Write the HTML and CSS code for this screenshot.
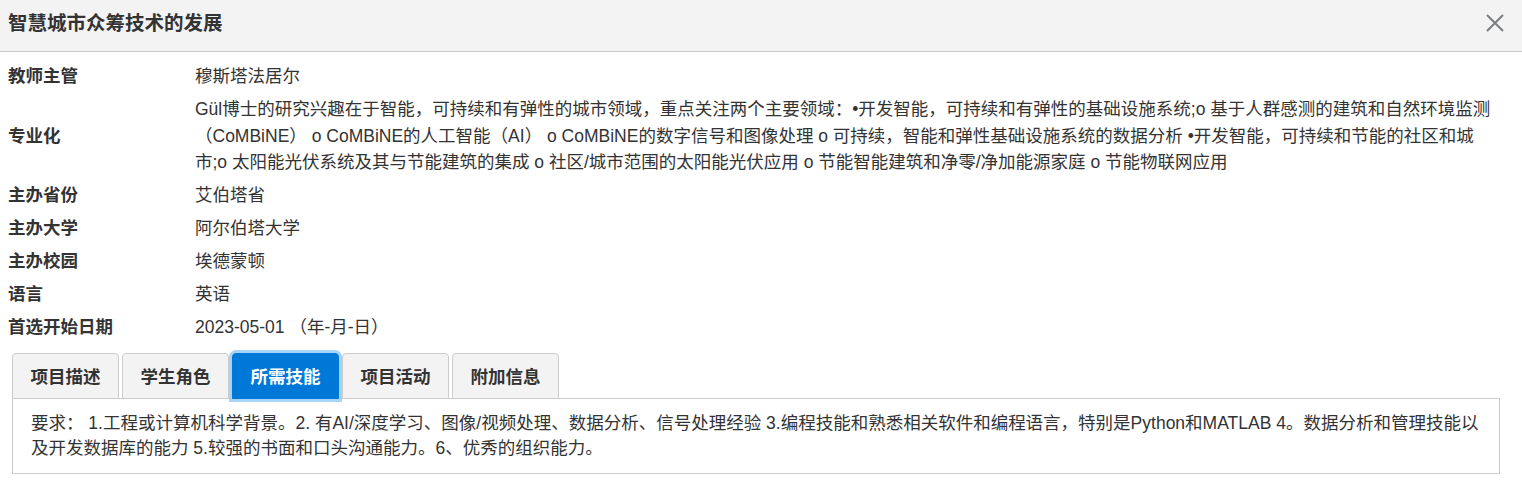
FILE: index.html
```html
<!DOCTYPE html>
<html lang="zh-CN">
<head>
<meta charset="utf-8">
<title>智慧城市众筹技术的发展</title>
<link rel="stylesheet" href="styles.css">
</head>
<body>
<div class="modal">
  <div class="modal-header">
    <h4 class="modal-title">智慧城市众筹技术的发展</h4>
    <button class="close" type="button" aria-label="关闭">
      <svg width="18" height="18" viewBox="0 0 18 18"><path d="M1 1 L17 17 M17 1 L1 17" stroke="currentColor" stroke-width="2" fill="none"/></svg>
    </button>
  </div>
  <div class="modal-body">
    <div class="info">
      <div class="label">教师主管</div>
      <div class="value">穆斯塔法居尔</div>
      <div class="label">专业化</div>
      <div class="value">Gül博士的研究兴趣在于智能，可持续和有弹性的城市领域，重点关注两个主要领域：•开发智能，可持续和有弹性的基础设施系统;o 基于人群感测的建筑和自然环境监测（CoMBiNE） o CoMBiNE的人工智能（AI） o CoMBiNE的数字信号和图像处理 o 可持续，智能和弹性基础设施系统的数据分析 •开发智能，可持续和节能的社区和城市;o 太阳能光伏系统及其与节能建筑的集成 o 社区/城市范围的太阳能光伏应用 o 节能智能建筑和净零/净加能源家庭 o 节能物联网应用</div>
      <div class="label">主办省份</div>
      <div class="value">艾伯塔省</div>
      <div class="label">主办大学</div>
      <div class="value">阿尔伯塔大学</div>
      <div class="label">主办校园</div>
      <div class="value">埃德蒙顿</div>
      <div class="label">语言</div>
      <div class="value">英语</div>
      <div class="label">首选开始日期</div>
      <div class="value">2023-05-01 （年-月-日）</div>
    </div>
    <div class="tabs">
      <ul class="tab-list">
        <li class="tab">项目描述</li>
        <li class="tab">学生角色</li>
        <li class="tab active">所需技能</li>
        <li class="tab">项目活动</li>
        <li class="tab">附加信息</li>
      </ul>
      <div class="tab-panel">要求： 1.工程或计算机科学背景。2. 有AI/深度学习、图像/视频处理、数据分析、信号处理经验 3.编程技能和熟悉相关软件和编程语言，特别是Python和MATLAB 4。数据分析和管理技能以及开发数据库的能力 5.较强的书面和口头沟通能力。6、优秀的组织能力。</div>
    </div>
  </div>
</div>
</body>
</html>
```

FILE: styles.css
```css
html, body {
  margin: 0;
  padding: 0;
  background: #fff;
}
body {
  font-family: "Liberation Sans", "Noto Sans CJK SC", sans-serif;
  font-size: 17.5px;
  color: #333;
}
.modal-header {
  display: flex;
  align-items: center;
  justify-content: space-between;
  height: 52px;
  box-sizing: border-box;
  padding: 0 18px 6px 8px;
  background: #f3f3f3;
  border-bottom: 1px solid #ccc;
}
.modal-title {
  margin: 0;
  font-size: 19.5px;
  font-weight: bold;
  line-height: 26px;
}
.close {
  border: 0;
  background: none;
  padding: 0;
  color: #7a7d80;
  display: flex;
}
.modal-body {
  padding: 8px 22px 15px 8px;
}
.info {
  display: grid;
  grid-template-columns: 187px 1fr;
  line-height: 26.5px;
  padding-right: 6px;
}
.label,
.value {
  padding: 3.25px 0;
  display: flex;
  align-items: center;
}
.label {
  font-weight: bold;
}
.value {
  display: block;
}
.tabs {
  margin: 9px 0 0 4px;
}
.tab-list {
  list-style: none;
  margin: 0 0 -1px 0;
  padding: 0;
  display: flex;
  gap: 3px;
  position: relative;
  z-index: 1;
}
.tab {
  padding: 11px 17.5px 8px;
  line-height: 25px;
  font-weight: bold;
  background: #f3f3f3;
  border: 1px solid #ccc;
  border-radius: 4px 4px 0 0;
}
.tab.active {
  background: #0078d7;
  border-color: #0078d7;
  color: #fff;
  box-shadow: 0 0 0 3px #a6d3f8;
}
.tab-panel {
  border: 1px solid #ccc;
  padding: 12px 18px 12px;
  line-height: 25px;
}
```
